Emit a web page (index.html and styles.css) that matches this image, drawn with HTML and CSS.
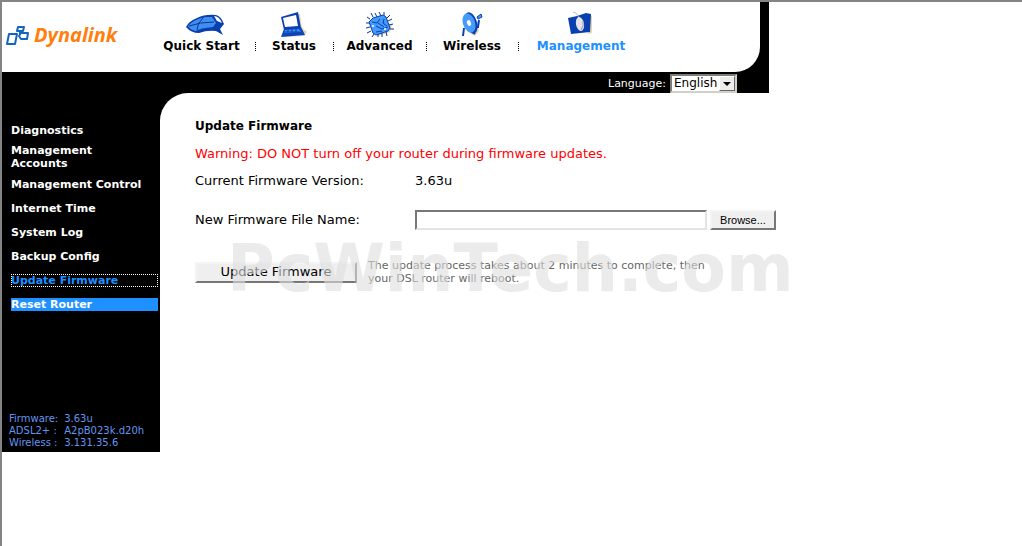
FILE: index.html
```html
<!DOCTYPE html>
<html lang="en">

<head>
    <meta charset="UTF-8">
    <meta name="viewport" content="width=device-width, initial-scale=1.0">
    <title>Dynalink - Update Firmware</title>
    <link rel="stylesheet" href="styles.css">
</head>

<body>
    <div class="top">
        <header class="header">
            <a class="logo" href="#">
                <svg width="26" height="22" viewBox="0 0 26 22" fill="none" stroke="#1565c0" stroke-width="2" stroke-linejoin="round">
                    <path d="M3 9h8l-2 10H1z" />
                    <path d="M12 2h6l-1 4h-6z" />
                    <path d="M15 8h7l-1 6h-6l-2-3z" />
                    <path d="M14 6v3" />
                </svg>
                <span>Dynalink</span>
            </a>
            <nav class="nav">
                <a href="#">
                    <svg class="modem" width="40" height="24" viewBox="0 0 40 24">
                        <path d="M1 14Q4 8 12 5Q20 1 31 2Q36 3 39 11L35 16L38 22L31 18Q22 17 14 20Q6 20 1 14z" fill="#0a3fb0" />
                        <path d="M3 13Q9 6 21 4L27 4L31 10L28 14Q15 15 11 18Q5 17 3 13z" fill="#3f8ff0" />
                        <path d="M29 3q5 0 8 7l-5-2z" fill="#fff" />
                        <path d="M4 13q11-4 25-4M18 5q-6 5-6 12" stroke="#0a3496" fill="none" />
                    </svg>
                    Quick Start
                </a>
                <a href="#">
                    <svg width="30" height="26" viewBox="0 0 30 26">
                        <path d="M5 25l20-1 3-4-5-4-2-14-3 0z" fill="#ded7b4" />
                        <path d="M2 5L19 0L22 16L5 18z" fill="#0a3fb0" />
                        <path d="M4 6L17 3L19 14L6 15z" fill="#fff" />
                        <path d="M5 17L22 15L26 23L2 25z" fill="#0d44b8" />
                        <path d="M6 18l14-1 2 3-17 1z" fill="#3f8ff0" />
                        <path d="M5 20h16M9 17v3M13 17v3M17 17v3" stroke="#0a3fb0" />
                    </svg>
                    Status
                </a>
                <a href="#">
                    <svg width="30" height="26" viewBox="0 0 30 26">
                        <path d="M13 24l12-4 2-7-7-4z" fill="#ded7b4" />
                        <path d="M5 7L2 5M8 5L6 1M12 5L10 1M16 4L14 0M19 4V0M22 6l3-3M23 9l4-2M24 13l4-1M25 17h4M4 11H1M5 15l-4 1M6 19l-4 2M9 22l-2 3M13 22v3M17 21v4M21 20l1 4" stroke="#0a3496" />
                        <path d="M4 10L8 6L18 3L21 5L25 16L23 19L11 23L8 21z" fill="#449bfa" stroke="#0a3fb0" />
                        <path d="M7 10l5 1 3-4M11 14l6 3 6-2M13 11l6 4M19 7l-1 4 4 3M11 20l6-1" fill="none" stroke="#0a3fb0" />
                        <circle cx="8" cy="14" r="1" fill="#fff" />
                        <circle cx="20" cy="17" r="1" fill="#fff" />
                    </svg>
                    Advanced
                </a>
                <a href="#">
                    <svg width="24" height="26" viewBox="0 0 24 26">
                        <path d="M11 22l5-2 2-4 1 3-4 5z" fill="#ded7b4" />
                        <path d="M4 16l-1 8M11 18l4 4M12 15l6 0 1-7" fill="none" stroke="#0a3fb0" stroke-width="2" />
                        <ellipse cx="11" cy="11" rx="6" ry="11" transform="rotate(-18 11 11)" fill="#0a3fb0" />
                        <ellipse cx="9" cy="11" rx="6" ry="10" transform="rotate(-18 9 11)" fill="#449bfa" />
                        <ellipse cx="9" cy="11" rx="2" ry="3" transform="rotate(-18 9 11)" fill="#fff" />
                        <path d="M17 5l4-3 1 3-4 2z" fill="#449bfa" stroke="#0a3fb0" />
                    </svg>
                    Wireless
                </a>
                <a class="current" href="#">
                    <svg class="mouse" width="28" height="24" viewBox="0 0 28 24">
                        <path d="M22 3l3 1v17l-4 1z" fill="#ded7b4" />
                        <path d="M1 6L10 4L19 1L24 2L23 20L4 22z" fill="#0a3fb0" />
                        <path d="M6 0q5 1 6 7" fill="none" stroke="#a9b8d8" />
                        <ellipse cx="13" cy="12" rx="4" ry="7" transform="rotate(-10 13 12)" fill="#e4e4e8" />
                        <path d="M16 9q1 5-2 9" stroke="#8f98b0" fill="none" />
                    </svg>
                    Management
                </a>
            </nav>
        </header>
        <div class="language">
            <label for="language">Language:</label>
            <div class="select">
                <select id="language" name="language">
                    <option>English</option>
                </select>
                <span class="arrow"></span>
            </div>
        </div>
    </div>

    <div class="content">
        <aside class="sidebar">
            <ul>
                <li><a href="#">Diagnostics</a></li>
                <li><a href="#">Management Accounts</a></li>
                <li><a href="#">Management Control</a></li>
                <li><a href="#">Internet Time</a></li>
                <li><a href="#">System Log</a></li>
                <li><a href="#">Backup Config</a></li>
                <li><a class="focused" href="#">Update Firmware</a></li>
                <li><a class="hovered" href="#">Reset Router</a></li>
            </ul>
            <dl class="versions">
                <dt>Firmware:</dt>
                <dd>3.63u</dd>
                <dt>ADSL2+ :</dt>
                <dd>A2pB023k.d20h</dd>
                <dt>Wireless :</dt>
                <dd>3.131.35.6</dd>
            </dl>
        </aside>
        <main class="main">
            <form class="panel">
                <h1>Update Firmware</h1>
                <p class="warning">Warning: DO NOT turn off your router during firmware updates.</p>
                <div class="row">
                    <span class="name">Current Firmware Version:</span>
                    <span>3.63u</span>
                </div>
                <div class="row file-row">
                    <label class="name" for="file">New Firmware File Name:</label>
                    <input type="text" id="file" name="file">
                    <button type="button" class="browse">Browse...</button>
                </div>
                <div class="row update-row">
                    <button type="button" class="update">Update Firmware</button>
                    <p class="note">The update process takes about 2 minutes to complete, then your DSL router will reboot.</p>
                    <div class="watermark">PcWinTech.com</div>
                </div>
            </form>
        </main>
    </div>
</body>

</html>
```
FILE: styles.css
```css
* {
    box-sizing: border-box;
}

html {
    height: 100%;
}

body {
    margin: 0;
    min-height: 100%;
    border-top: 2px solid #848484;
    border-left: 2px solid #848484;
    background: #fff;
    color: #000;
    font-family: Verdana, "DejaVu Sans", sans-serif;
    font-size: 13px;
}

a {
    color: inherit;
    text-decoration: none;
}

/* Header */
.top {
    max-width: 767px;
    background: #000;
}

.header {
    display: flex;
    height: 70px;
    margin-right: 9px;
    background: #fff;
    border-bottom-right-radius: 25px;
}

.logo {
    display: flex;
    gap: 2px;
    width: 146px;
    padding: 19px 0 0 4px;
    color: #ff7f0e;
    font: italic bold 20px/28px "Open Sans", sans-serif;
}

.logo svg {
    margin-top: 4px;
}

.nav {
    display: grid;
    grid-template-columns: 107px 78px 93px 92px 126px;
    font-size: 12px;
    font-weight: bold;
    line-height: 14px;
}

.nav a {
    position: relative;
    display: flex;
    flex-direction: column;
    align-items: center;
    justify-content: flex-end;
    height: 51px;
    white-space: nowrap;
}

.nav svg {
    margin-bottom: 1px;
}

.nav .mouse {
    margin-bottom: 3px;
}

.nav .modem {
    margin: 0 0 2px 6px;
}

.nav a + a::before {
    content: "";
    position: absolute;
    left: 0;
    bottom: 2px;
    height: 9px;
    border-left: 1px dotted #000;
}

.nav .current {
    color: #1e90ff;
}

.language {
    display: flex;
    justify-content: flex-end;
    align-items: center;
    gap: 4px;
    height: 21px;
    padding: 1px 32px 0 0;
    color: #fff;
    font-size: 11px;
}

.select {
    position: relative;
}

.select select {
    display: block;
    width: 67px;
    height: 19px;
    padding: 0 2px;
    border: 2px inset #d4d0c8;
    border-radius: 0;
    background: #fff;
    color: #000;
    appearance: none;
    font: 12px/14px "DejaVu Sans", sans-serif;
}

.arrow {
    position: absolute;
    top: 2px;
    right: 2px;
    width: 16px;
    height: 15px;
    border: 1px solid;
    border-color: #fff #666 #666 #fff;
    background: #ececec;
    pointer-events: none;
}

.arrow::before {
    content: "";
    position: absolute;
    top: 5px;
    left: 3px;
    border: 4px solid transparent;
    border-top-color: #000;
    border-bottom: 0;
}

/* Sidebar */
.content {
    display: flex;
    align-items: flex-start;
}

.sidebar {
    display: flex;
    flex: 0 0 158px;
    flex-direction: column;
    justify-content: space-between;
    min-height: 359px;
    padding: 25px 2px 3px 9px;
    background: #000;
    color: #fff;
}

.sidebar ul {
    margin: 0;
    padding: 0;
    list-style: none;
    font-size: 11px;
    font-weight: bold;
    line-height: 13px;
}

.sidebar li {
    display: flex;
    align-items: center;
    min-height: 24px;
    padding: 2px 0;
}

.sidebar li a {
    flex: 1;
    padding-right: 10px;
}

.sidebar .focused {
    color: #1e90ff;
    outline: 1px dotted #fff;
    outline-offset: -1px;
}

.sidebar .hovered {
    background: #1e90ff;
}

.versions {
    display: grid;
    grid-template-columns: auto 1fr;
    column-gap: 6px;
    margin: 0 0 0 -2px;
    color: #6495ed;
    font-size: 10px;
    line-height: 12px;
}

.versions dd {
    margin: 0;
}

/* Main */
.main {
    flex: 1;
    background: linear-gradient(#000, #000) no-repeat 0 0 / 28px 28px;
}

.panel {
    padding: 25px 35px;
    background: #fff;
    border-top-left-radius: 28px;
    line-height: 16px;
}

.panel h1 {
    margin: 0 0 12px;
    font-size: 12px;
    line-height: 16px;
}

.warning {
    margin: 0 0 11px;
    color: #f00;
}

.row {
    display: flex;
}

.name {
    width: 220px;
}

.file-row {
    align-items: center;
    margin-top: 21px;
}

.file-row input {
    width: 292px;
    height: 20px;
    margin-right: 3px;
    padding: 0 2px;
    border: 2px solid;
    border-color: #777 #e3e3e3 #e3e3e3 #777;
    background: #fff;
}

.browse,
.update {
    padding: 0;
    border: 2px solid;
    border-color: #f4f4f4 #777 #777 #f4f4f4;
    border-radius: 0;
    background: #efefef;
    color: #000;
}

.browse {
    width: 66px;
    height: 20px;
    font: 11px/14px "Liberation Sans", Arial, sans-serif;
}

.update {
    width: 162px;
    height: 21px;
    font: 13px/16px Verdana, "DejaVu Sans", sans-serif;
}

.update-row {
    position: relative;
    align-items: center;
    margin-top: 29px;
}

.note {
    width: 360px;
    margin: 0 0 0 11px;
    color: #666;
    font-size: 11px;
    line-height: 13px;
}

.watermark {
    position: absolute;
    top: -30px;
    left: 32px;
    color: rgba(222, 222, 222, 0.6);
    font-size: 65px;
    font-weight: bold;
    line-height: 80px;
    pointer-events: none;
}
```
